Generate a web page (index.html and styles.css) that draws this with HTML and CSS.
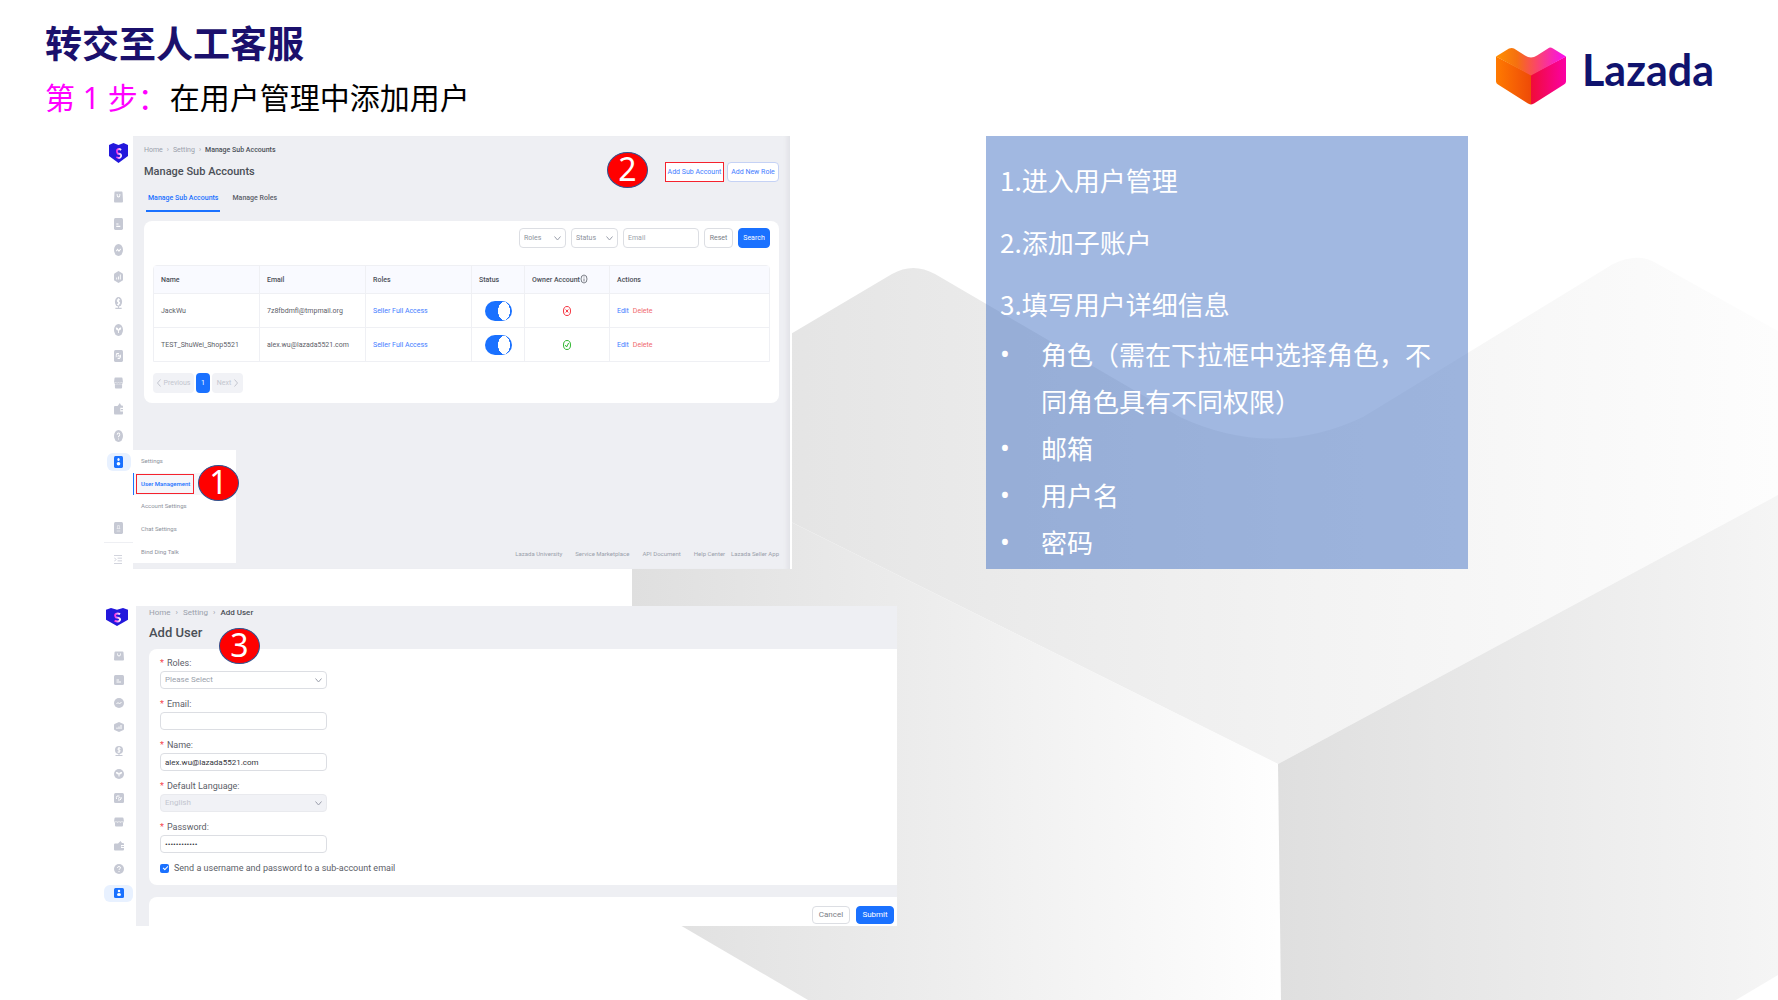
FILE: index.html
```html
<!DOCTYPE html>
<html lang="zh-CN">
<head>
<meta charset="utf-8">
<title>转交至人工客服</title>
<link rel="stylesheet" href="styles.css">
</head>
<body>
<svg class="backdrop" viewBox="0 0 1778 1000" preserveAspectRatio="xMaxYMax slice" aria-hidden="true">
  <defs>
    <linearGradient id="face-top" gradientUnits="userSpaceOnUse" x1="632" y1="0" x2="1778" y2="0"><stop offset="0" stop-color="#e2e2e2"/><stop offset=".15" stop-color="#e5e5e5"/><stop offset=".6" stop-color="#f3f3f3"/><stop offset="1" stop-color="#fdfdfd"/></linearGradient>
    <linearGradient id="face-left" gradientUnits="userSpaceOnUse" x1="632" y1="0" x2="1278" y2="0"><stop offset="0" stop-color="#dfdfdf"/><stop offset=".5" stop-color="#eeeeee"/><stop offset="1" stop-color="#fefefe"/></linearGradient>
    <linearGradient id="face-right" gradientUnits="userSpaceOnUse" x1="1278" y1="0" x2="1778" y2="0"><stop offset="0" stop-color="#dfdfdf"/><stop offset="1" stop-color="#f5f5f5"/></linearGradient>
    <linearGradient id="logo-top" x1="0" y1="0" x2="1" y2="0"><stop offset="0" stop-color="#ff9000"/><stop offset=".3" stop-color="#f57010"/><stop offset=".55" stop-color="#fa4a60"/><stop offset="1" stop-color="#f80cf4"/></linearGradient>
    <linearGradient id="logo-left" x1="0" y1="0" x2="1" y2="0"><stop offset="0" stop-color="#ff7a00"/><stop offset="1" stop-color="#ee4a08"/></linearGradient>
    <linearGradient id="logo-right" x1="0" y1="0" x2="1" y2="0"><stop offset="0" stop-color="#f00c38"/><stop offset="1" stop-color="#fb00a4"/></linearGradient>
    <linearGradient id="shield-s" x1="0" y1="0" x2="1" y2="0"><stop offset="0" stop-color="#f020e0"/><stop offset="1" stop-color="#fff"/></linearGradient>
  </defs>
  <path fill="url(#face-top)" d="M632 428 892 274Q913 262 935 274L1180 417Q1272 460 1363 417L1613 264Q1638 252 1656 263L1778 331V495L1278 764 632 443Z"/>
  <path fill="url(#face-left)" d="M632 443 1278 764 1281 1000H808L632 897Z"/>
  <path fill="url(#face-right)" d="M1278 764 1778 495V975L1736 1000H1281Z"/>
</svg>

<svg class="sprite" aria-hidden="true">
  <symbol id="i-shield" viewBox="0 0 22 20" preserveAspectRatio="none"><path fill="#2318dc" d="M0 2 5 0l6 2 6-2 5 2v11l-11 7-11-7Z"/><path fill="none" stroke="url(#shield-s)" stroke-width="2" d="M14 7Q12 5.500 10 6.500T10 10.500L12.500 11Q15 12 13.500 14T8.500 14"/></symbol>
  <symbol id="i-bag" viewBox="0 0 20 20" preserveAspectRatio="none"><path fill="currentColor" d="M3 1h14q2 0 2 2l1 14q0 2-2 2H2q-2 0-2-2L1 3q0-2 2-2Z"/><path fill="none" stroke="#fff" stroke-width="2" d="M7 5v2q0 3 3 3t3-3V5"/></symbol>
  <symbol id="i-doc" viewBox="0 0 20 20" preserveAspectRatio="none"><rect width="20" height="20" rx="3" fill="currentColor"/><path stroke="#fff" stroke-width="2" d="M5 10h5M5 14h9"/></symbol>
  <symbol id="i-trend" viewBox="0 0 20 20" preserveAspectRatio="none"><circle cx="10" cy="10" r="10" fill="currentColor"/><path fill="none" stroke="#fff" stroke-width="2" d="m5 12 3-3 3 3 4-4"/></symbol>
  <symbol id="i-bars" viewBox="0 0 20 20" preserveAspectRatio="none"><path fill="currentColor" d="m10 0 9 4q1 1 1 2v8q0 1-1 2l-9 4-9-4q-1-1-1-2V6q0-1 1-2Z"/><path stroke="#fff" stroke-width="2" d="M6 14v-3M10 14V9M14 14V6"/></symbol>
  <symbol id="i-coin" viewBox="0 0 20 20" preserveAspectRatio="none"><circle cx="10" cy="8" r="8" fill="currentColor"/><path stroke="currentColor" stroke-width="2" d="M3 19h14M10 14v5"/><path fill="none" stroke="#fff" stroke-width="2" d="M13 5Q10 3 8 5t2 3 2 3-5 1M10 2v12"/></symbol>
  <symbol id="i-leaf" viewBox="0 0 20 20" preserveAspectRatio="none"><circle cx="10" cy="10" r="10" fill="currentColor"/><path fill="#fff" d="M4 6q5-1 6 3 1-4 6-3 0 5-5 5v4H9v-4Q4 11 4 6Z"/></symbol>
  <symbol id="i-box" viewBox="0 0 20 20" preserveAspectRatio="none"><rect width="20" height="20" rx="3" fill="currentColor"/><path fill="none" stroke="#fff" stroke-width="2" d="M6 6h5M14 8q2 4-2 6H8M5 12q-1-3 1-6M8 11l3-2 2 2"/></symbol>
  <symbol id="i-store" viewBox="0 0 20 20" preserveAspectRatio="none"><path fill="currentColor" d="M3 1h14q2 0 2 2l1 6H0l1-6q0-2 2-2ZM2 12h16v5q0 2-2 2H4q-2 0-2-2Z"/><path fill="none" stroke="currentColor" stroke-width="2" d="m1 10 3 1 3-1 3 1 3-1 3 1 3-1"/></symbol>
  <symbol id="i-wallet" viewBox="0 0 20 20" preserveAspectRatio="none"><path fill="currentColor" d="M2 5h6l5-5 3 4h2q2 0 2 2v2h-6v6h6v3q0 2-2 2H2q-2 0-2-2V7q0-2 2-2Z"/><path fill="currentColor" d="M15 10h5v2h-5z"/></symbol>
  <symbol id="i-help" viewBox="0 0 20 20" preserveAspectRatio="none"><circle cx="10" cy="10" r="10" fill="currentColor"/><path fill="none" stroke="#fff" stroke-width="2" d="M7 8q0-3 3-3t3 3q0 1-3 3v1M10 14v2"/></symbol>
  <symbol id="i-user" viewBox="0 0 20 20" preserveAspectRatio="none"><rect width="20" height="20" rx="3" fill="currentColor"/><circle cx="10" cy="6" r="2.500" fill="#fff"/><ellipse cx="10" cy="13" rx="4" ry="3" fill="#fff"/></symbol>
  <symbol id="i-card" viewBox="0 0 20 20" preserveAspectRatio="none"><rect width="20" height="20" rx="3" fill="currentColor"/><path fill="none" stroke="#fff" d="M8 11V6h4v5M6 11h8M6 15h8"/></symbol>
  <symbol id="i-menu" viewBox="0 0 20 20" preserveAspectRatio="none"><path fill="none" stroke="currentColor" stroke-width="2" d="M0 1h20M9 7h11M9 13h11M0 19h20M1 6l4 4-4 4"/></symbol>
  <symbol id="i-down" viewBox="0 0 14 10" preserveAspectRatio="none"><path fill="none" stroke="currentColor" stroke-width="2" d="m1 1 6 7 6-7"/></symbol>
</svg>

<header class="page-head">
  <div>
    <h1 class="title">转交至人工客服</h1>
    <p class="subtitle"><span class="step">第 1 步：</span>在用户管理中添加用户</p>
  </div>
  <div class="brand">
    <svg class="brand-mark" viewBox="0 0 70 57" aria-hidden="true">
      <path fill="url(#logo-left)" d="M0 9 35 27V57Q34 57 32 56L2 37Q0 36 0 34Z"/>
      <path fill="url(#logo-right)" d="M70 9 35 27V57Q36 57 38 56L68 37Q70 36 70 34Z"/>
      <path fill="url(#logo-top)" d="M0 9 13 1Q16 0 18 1L29 8Q35 12 41 8L52 1Q54-1 57 1L70 9 35 28Z"/>
    </svg>
    <span class="brand-name">Lazada</span>
  </div>
</header>

<main>
  <div class="row row-accounts">
    <section class="shot accounts" aria-label="Manage Sub Accounts">
      <aside class="side">
        <svg class="shield"><use href="#i-shield"/></svg>
        <nav class="side-icons">
          <svg class="ico"><use href="#i-bag"/></svg>
          <svg class="ico"><use href="#i-doc"/></svg>
          <svg class="ico"><use href="#i-trend"/></svg>
          <svg class="ico"><use href="#i-bars"/></svg>
          <svg class="ico"><use href="#i-coin"/></svg>
          <svg class="ico"><use href="#i-leaf"/></svg>
          <svg class="ico"><use href="#i-box"/></svg>
          <svg class="ico"><use href="#i-store"/></svg>
          <svg class="ico"><use href="#i-wallet"/></svg>
          <svg class="ico"><use href="#i-help"/></svg>
          <span class="active"><svg class="ico"><use href="#i-user"/></svg></span>
        </nav>
        <svg class="ico card-ico"><use href="#i-card"/></svg>
        <div class="side-foot"><svg class="menu-ico"><use href="#i-menu"/></svg></div>
      </aside>
      <div class="content">
        <div class="crumbs"><a href="#">Home</a><i>›</i><a href="#">Setting</a><i>›</i><b>Manage Sub Accounts</b></div>
        <div class="head-line">
          <h2>Manage Sub Accounts</h2>
          <div class="head-actions"><button class="btn outline marked">Add Sub Account</button><button class="btn outline">Add New Role</button></div>
        </div>
        <div class="tabs"><a class="tab on" href="#">Manage Sub Accounts</a><a class="tab" href="#">Manage Roles</a></div>
        <div class="card">
          <form class="filters">
            <span class="pick"><select aria-label="Roles"><option>Roles</option></select><svg class="down"><use href="#i-down"/></svg></span>
            <span class="pick"><select aria-label="Status"><option>Status</option></select><svg class="down"><use href="#i-down"/></svg></span>
            <span class="email"><input type="text" placeholder="Email" aria-label="Email"></span>
            <button class="btn" type="button">Reset</button>
            <button class="btn primary" type="button">Search</button>
          </form>
          <table>
            <colgroup><col class="c-wide"><col class="c-wide"><col class="c-wide"><col class="c-status"><col class="c-owner"><col class="c-actions"></colgroup>
            <thead><tr><th>Name</th><th>Email</th><th>Roles</th><th>Status</th><th>Owner Account<svg class="info" viewBox="0 0 8 10"><ellipse cx="4" cy="5" rx="3" ry="4" fill="none" stroke="currentColor" stroke-width=".7"/><path stroke="currentColor" stroke-width=".7" d="M4 2.500v1M4 4.500v3"/></svg></th><th>Actions</th></tr></thead>
            <tbody>
              <tr><td>JackWu</td><td>7z8fbdmfl@tmpmail.org</td><td><a href="#">Seller Full Access</a></td><td class="mid"><input class="switch" type="checkbox" checked aria-label="JackWu status"></td><td class="mid"><svg class="state no" viewBox="0 0 8 10"><ellipse cx="4" cy="5" rx="3.500" ry="4.500" fill="none" stroke="currentColor"/><path stroke="currentColor" d="m2.700 3.500 2.600 3M5.300 3.500l-2.600 3"/></svg></td><td class="acts"><a href="#">Edit</a><a class="del" href="#">Delete</a></td></tr>
              <tr><td>TEST_ShuWei_Shop5521</td><td>alex.wu@lazada5521.com</td><td><a href="#">Seller Full Access</a></td><td class="mid"><input class="switch" type="checkbox" checked aria-label="TEST_ShuWei_Shop5521 status"></td><td class="mid"><svg class="state yes" viewBox="0 0 8 10"><ellipse cx="4" cy="5" rx="3.500" ry="4.500" fill="none" stroke="currentColor"/><path fill="none" stroke="currentColor" d="m2.300 5 1.300 2 2-4"/></svg></td><td class="acts"><a href="#">Edit</a><a class="del" href="#">Delete</a></td></tr>
            </tbody>
          </table>
          <div class="pager"><button class="page" disabled><svg class="arrow" viewBox="0 0 4 8"><path d="M3.500.5.500 4l3 3.500"/></svg>Previous</button><button class="page now">1</button><button class="page" disabled>Next<svg class="arrow" viewBox="0 0 4 8"><path d="m.5.5 3 3.500-3 3.500"/></svg></button></div>
        </div>
        <footer class="links"><a href="#">Lazada University</a><a href="#">Service Marketplace</a><a href="#">API Document</a><a href="#">Help Center</a><a class="near" href="#">Lazada Seller App</a></footer>
      </div>
      <nav class="submenu"><a href="#">Settings</a><a class="current" href="#"><span>User Management</span></a><a href="#">Account Settings</a><a href="#">Chat Settings</a><a href="#">Bind Ding Talk</a></nav>
      <span class="badge badge-1">1</span>
      <span class="badge badge-2">2</span>
    </section>

    <section class="note">
      <ol class="steps"><li>1.进入用户管理</li><li>2.添加子账户</li><li>3.填写用户详细信息</li></ol>
      <ul class="details"><li>角色（需在下拉框中选择角色，不同角色具有不同权限）</li><li>邮箱</li><li>用户名</li><li>密码</li></ul>
    </section>
  </div>

  <div class="row row-adduser">
    <section class="shot adduser" aria-label="Add User">
      <aside class="side">
        <svg class="shield"><use href="#i-shield"/></svg>
        <nav class="side-icons">
          <svg class="ico"><use href="#i-bag"/></svg>
          <svg class="ico"><use href="#i-doc"/></svg>
          <svg class="ico"><use href="#i-trend"/></svg>
          <svg class="ico"><use href="#i-bars"/></svg>
          <svg class="ico"><use href="#i-coin"/></svg>
          <svg class="ico"><use href="#i-leaf"/></svg>
          <svg class="ico"><use href="#i-box"/></svg>
          <svg class="ico"><use href="#i-store"/></svg>
          <svg class="ico"><use href="#i-wallet"/></svg>
          <svg class="ico"><use href="#i-help"/></svg>
          <span class="active"><svg class="ico"><use href="#i-user"/></svg></span>
        </nav>
      </aside>
      <div class="content">
        <div class="crumbs"><a href="#">Home</a><i>›</i><a href="#">Setting</a><i>›</i><b>Add User</b></div>
        <h2>Add User</h2>
        <form class="user-form">
          <div class="fields">
            <label class="req" for="f-roles">Roles:</label>
            <span class="pick"><select id="f-roles"><option>Please Select</option></select><svg class="down"><use href="#i-down"/></svg></span>
            <label class="req" for="f-email">Email:</label>
            <span class="pick"><input id="f-email" type="text"></span>
            <label class="req" for="f-name">Name:</label>
            <span class="pick"><input id="f-name" type="text" value="alex.wu@lazada5521.com"></span>
            <label class="req" for="f-lang">Default Language:</label>
            <span class="pick"><select id="f-lang" disabled><option>English</option></select><svg class="down"><use href="#i-down"/></svg></span>
            <label class="req" for="f-pass">Password:</label>
            <span class="pick"><input id="f-pass" type="password" value="abcdefghijkl"></span>
            <label class="send"><input type="checkbox" checked>Send a username and password to a sub-account email</label>
          </div>
          <div class="form-foot"><button class="btn" type="button">Cancel</button><button class="btn primary" type="button">Submit</button></div>
        </form>
      </div>
      <span class="badge badge-3">3</span>
    </section>
  </div>
</main>
</body>
</html>
```
FILE: styles.css
```css
* { box-sizing: border-box; }
body {
  margin: 0;
  min-height: 100vh;
  position: relative;
  background: #fff;
  color: #000;
  font-family: "Noto Sans CJK SC", sans-serif;
}
h1, h2, p, ol, ul { margin: 0; padding: 0; }
a { color: inherit; text-decoration: none; }
svg { display: block; flex: none; }
button, input, select { font: inherit; color: inherit; margin: 0; }
.sprite { position: absolute; width: 0; height: 0; }
.backdrop { position: absolute; inset: 0; width: 100%; height: 100%; z-index: -1; }

/* page header */
.page-head { display: flex; justify-content: space-between; padding: 17px 64px 17px 45px; }
.title { font-size: 37px; line-height: 50px; font-weight: 700; color: #1b106c; }
.subtitle { margin-top: 8px; font-size: 30px; line-height: 42px; }
.step { margin-right: 2px; color: #f0f; font-family: "Noto Sans", "Noto Sans CJK SC", sans-serif; }
.brand { display: flex; gap: 16px; padding-top: 30px; }
.brand-mark { width: 70px; height: 58px; }
.brand-name { font: 700 43px/46px Lato, sans-serif; color: #10136e; }

/* rows */
.row { display: grid; padding-left: 104px; }
.row-accounts { grid-template-columns: 688fr 194fr 482fr 310fr; }
.row-adduser { grid-template-columns: 793fr 881fr; margin-top: 37px; }
.note { grid-column: 3; }
.shot { position: relative; display: flex; font-family: Roboto, sans-serif; color: #5c6068; background: #fff; }
.content { flex: 1; min-width: 0; background: #eeeff3; }
.side { display: flex; flex-direction: column; align-items: center; color: #c6c9d4; flex: none; }
.side-icons { display: flex; flex-direction: column; justify-content: space-between; align-items: center; }
.active { display: flex; justify-content: center; align-items: center; margin: -3px 0; background: #e8f1ff; color: #1a71ff; border-radius: 6px; }
.crumbs { display: flex; gap: 4px; color: #9a9fab; }
.crumbs i { font-style: normal; }
.crumbs b { color: #4b4f57; font-weight: 500; }
h2 { color: #4b4f57; font-weight: 500; }
.btn { border: 1px solid #dcdee3; border-radius: 4px; background: #fff; padding: 0; color: #7a7e86; white-space: nowrap; }
.primary { background: #1a71ff; border-color: #1a71ff; color: #fff; }
.outline { color: #3f7dff; border-color: #c5d2f5; }
.pick { position: relative; display: block; flex: none; }
.shot select, .shot input[type="text"], .shot input[type="password"] {
  appearance: none; display: block; width: 100%; padding: 0 4px; border: 1px solid #dcdee3; border-radius: 4px; background: #fff; outline: 0; opacity: 1;
}
.pick .down { position: absolute; right: 5px; top: 50%; width: 7px; height: 5px; margin-top: -2px; color: #9a9fab; }

/* accounts screen */
.accounts { height: 433px; border-right: 2px solid #fff; font-size: 7px; line-height: 10px; }
.accounts .side { width: 29px; }
.accounts .shield { width: 19px; height: 20px; margin: 7px 1px 0 0; }
.accounts .side-icons { width: 100%; height: 277px; margin-top: 28px; }
.accounts .ico { width: 9px; height: 12px; }
.accounts .active { width: 24px; height: 18px; }
.accounts .card-ico { margin-top: 54px; }
.side-foot { width: 100%; margin-top: 8px; padding: 12px 0 0 10px; border-top: 1px solid #eeeff3; }
.menu-ico { width: 8px; height: 9px; }
.accounts .content { display: flex; flex-direction: column; padding: 9px 11px 10px 11px; box-shadow: inset -6px 0 4px -3px #e2e3e7; }
.head-line { display: flex; justify-content: space-between; align-items: center; height: 20px; margin-top: 7px; }
.accounts h2 { font-size: 11px; line-height: 20px; }
.head-actions { display: flex; gap: 3px; }
.head-actions .btn { height: 20px; width: 52px; }
.head-actions .marked { width: 59px; border: 1px solid #f5222d; border-radius: 0; }
.tabs { display: flex; gap: 10px; margin: 11px 0 0 2px; height: 19px; }
.tab { padding: 0 2px; font-weight: 500; }
.tab.on { color: #1a71ff; border-bottom: 2px solid #1a71ff; }
.card { margin-top: 9px; padding: 7px 9px 10px; background: #fff; border-radius: 8px; }
.filters { display: flex; justify-content: flex-end; gap: 5px; color: #8d929c; }
.filters .pick { width: 47px; }
.filters select, .filters input { height: 20px; }
.filters .email { width: 76px; }
.filters input::placeholder { color: #9a9fab; }
.filters .btn { height: 20px; width: 29px; }
.filters .primary { width: 32px; }
table { width: 100%; margin-top: 17px; table-layout: fixed; border-collapse: separate; border-spacing: 0; border: 1px solid #eff0f4; border-radius: 4px 4px 0 0; }
.c-wide { width: 106px; }
.c-status { width: 53px; }
.c-owner { width: 85px; }
th, td { padding: 0 0 0 7px; text-align: left; border-right: 1px solid #eff0f4; white-space: nowrap; }
th { height: 27px; background: #f9faff; color: #4b4f57; font-weight: 500; }
td { height: 34px; border-top: 1px solid #eff0f4; }
th:last-child, td:last-child { border-right: 0; }
td a { color: #3f7dff; }
td .del { margin-left: 4px; color: #f0696e; }
.mid { padding: 0; text-align: center; }
.mid > * { margin: 0 auto; }
.info { display: inline-block; width: 8px; height: 10px; vertical-align: -2px; }
.state { width: 8px; height: 10px; }
.no { color: #f5333f; }
.yes { color: #2fb62f; }
.switch { appearance: none; display: block; width: 27px; height: 20px; border-radius: 10px; background: radial-gradient(ellipse 6px 9px at 19px 10px, #fff 98%, #1a71ff 100%); }
.pager { display: flex; gap: 2px; margin-top: 11px; }
.page { display: flex; align-items: center; justify-content: center; gap: 3px; height: 20px; width: 31px; padding: 0; border: 0; border-radius: 4px; background: #f1f2f6; color: #c3c6cf; }
.page:first-child { width: 41px; }
.page.now { width: 14px; background: #1a71ff; color: #fff; }
.arrow { width: 4px; height: 8px; fill: none; stroke: currentColor; }
.links { display: flex; justify-content: flex-end; gap: 13px; margin-top: auto; font-size: 6px; color: #9a9fab; }
.near { margin-left: -7px; }
.submenu { position: absolute; left: 29px; top: 314px; width: 103px; height: 113px; display: flex; flex-direction: column; background: #fff; font-size: 6px; color: #8d929c; }
.submenu a { flex: 1; display: flex; align-items: center; padding-left: 8px; }
.submenu .current { padding-left: 2px; border-left: 1px solid #1a71ff; background: #f5f6fa; color: #1a71ff; font-weight: 500; }
.current span { padding: 4px; width: 58px; line-height: 10px; border: 1px solid #f5222d; white-space: nowrap; }

.badge { position: absolute; width: 41px; height: 36px; border: 1px solid #2f528f; border-radius: 50%; background: #f00; color: #fff; font: 32px/32px "Noto Sans", sans-serif; text-align: center; }
.badge-1 { left: 94px; top: 329px; }
.badge-2 { left: 503px; top: 16px; }
.badge-3 { left: 115px; top: 22px; }

/* blue note */
.note { padding: 20px 14px 4px; background: rgba(68, 114, 196, .5); color: #fff; font-size: 26px; line-height: 47px; }
.steps { list-style: none; display: flex; flex-direction: column; gap: 15px; }
.details { margin-top: 3px; padding-left: 41px; list-style: none; }
.details li::before { content: "•"; float: left; margin-left: -41px; font-family: "Noto Sans", sans-serif; }

/* add-user screen */
.adduser { font-size: 8px; line-height: 10px; }
.adduser .crumbs { gap: 5px; }
.adduser .side { width: 32px; padding-right: 3px; }
.adduser .shield { width: 22px; height: 18px; margin: 2px 3px 0 0; }
.adduser .side-icons { width: 100%; height: 248px; margin-top: 25px; }
.adduser .ico { width: 10px; height: 10px; }
.adduser .active { width: 29px; height: 17px; }
.adduser .content { padding: 2px 0 0 13px; }
.adduser h2 { margin: 5px 0 6px; font-size: 13px; line-height: 20px; }
.fields { display: flex; flex-direction: column; padding: 9px 11px 11px; height: 236px; background: #fff; border-radius: 8px 0 0 8px; }
.fields .pick { width: 167px; margin: 3px 0 10px; }
.fields .pick > select, .fields .pick > input { height: 18px; }
.fields .pick input { color: #33363c; }
.fields select { color: #9a9fab; }
.shot select:disabled { background: #f1f2f6; border-color: #e9eaee; color: #c3c6cf; }
.req, .send { font-size: 9px; }
.req::before { content: "*"; color: #f5474f; margin-right: 3px; }
.send { display: flex; align-items: center; gap: 5px; }
.send input { appearance: none; width: 9px; height: 9px; border-radius: 2px; background: #1a71ff; position: relative; }
.send input::after { content: ""; position: absolute; left: 3px; top: 2px; width: 4px; height: 2px; border: solid #fff; border-width: 0 0 1px 1px; transform: rotate(-45deg); }
.form-foot { display: flex; justify-content: flex-end; gap: 6px; margin-top: 12px; padding: 9px 3px 2px; background: #fff; border-top-left-radius: 8px; }
.form-foot .btn { width: 38px; height: 18px; }
.subtitle { height: 44px; }
```
